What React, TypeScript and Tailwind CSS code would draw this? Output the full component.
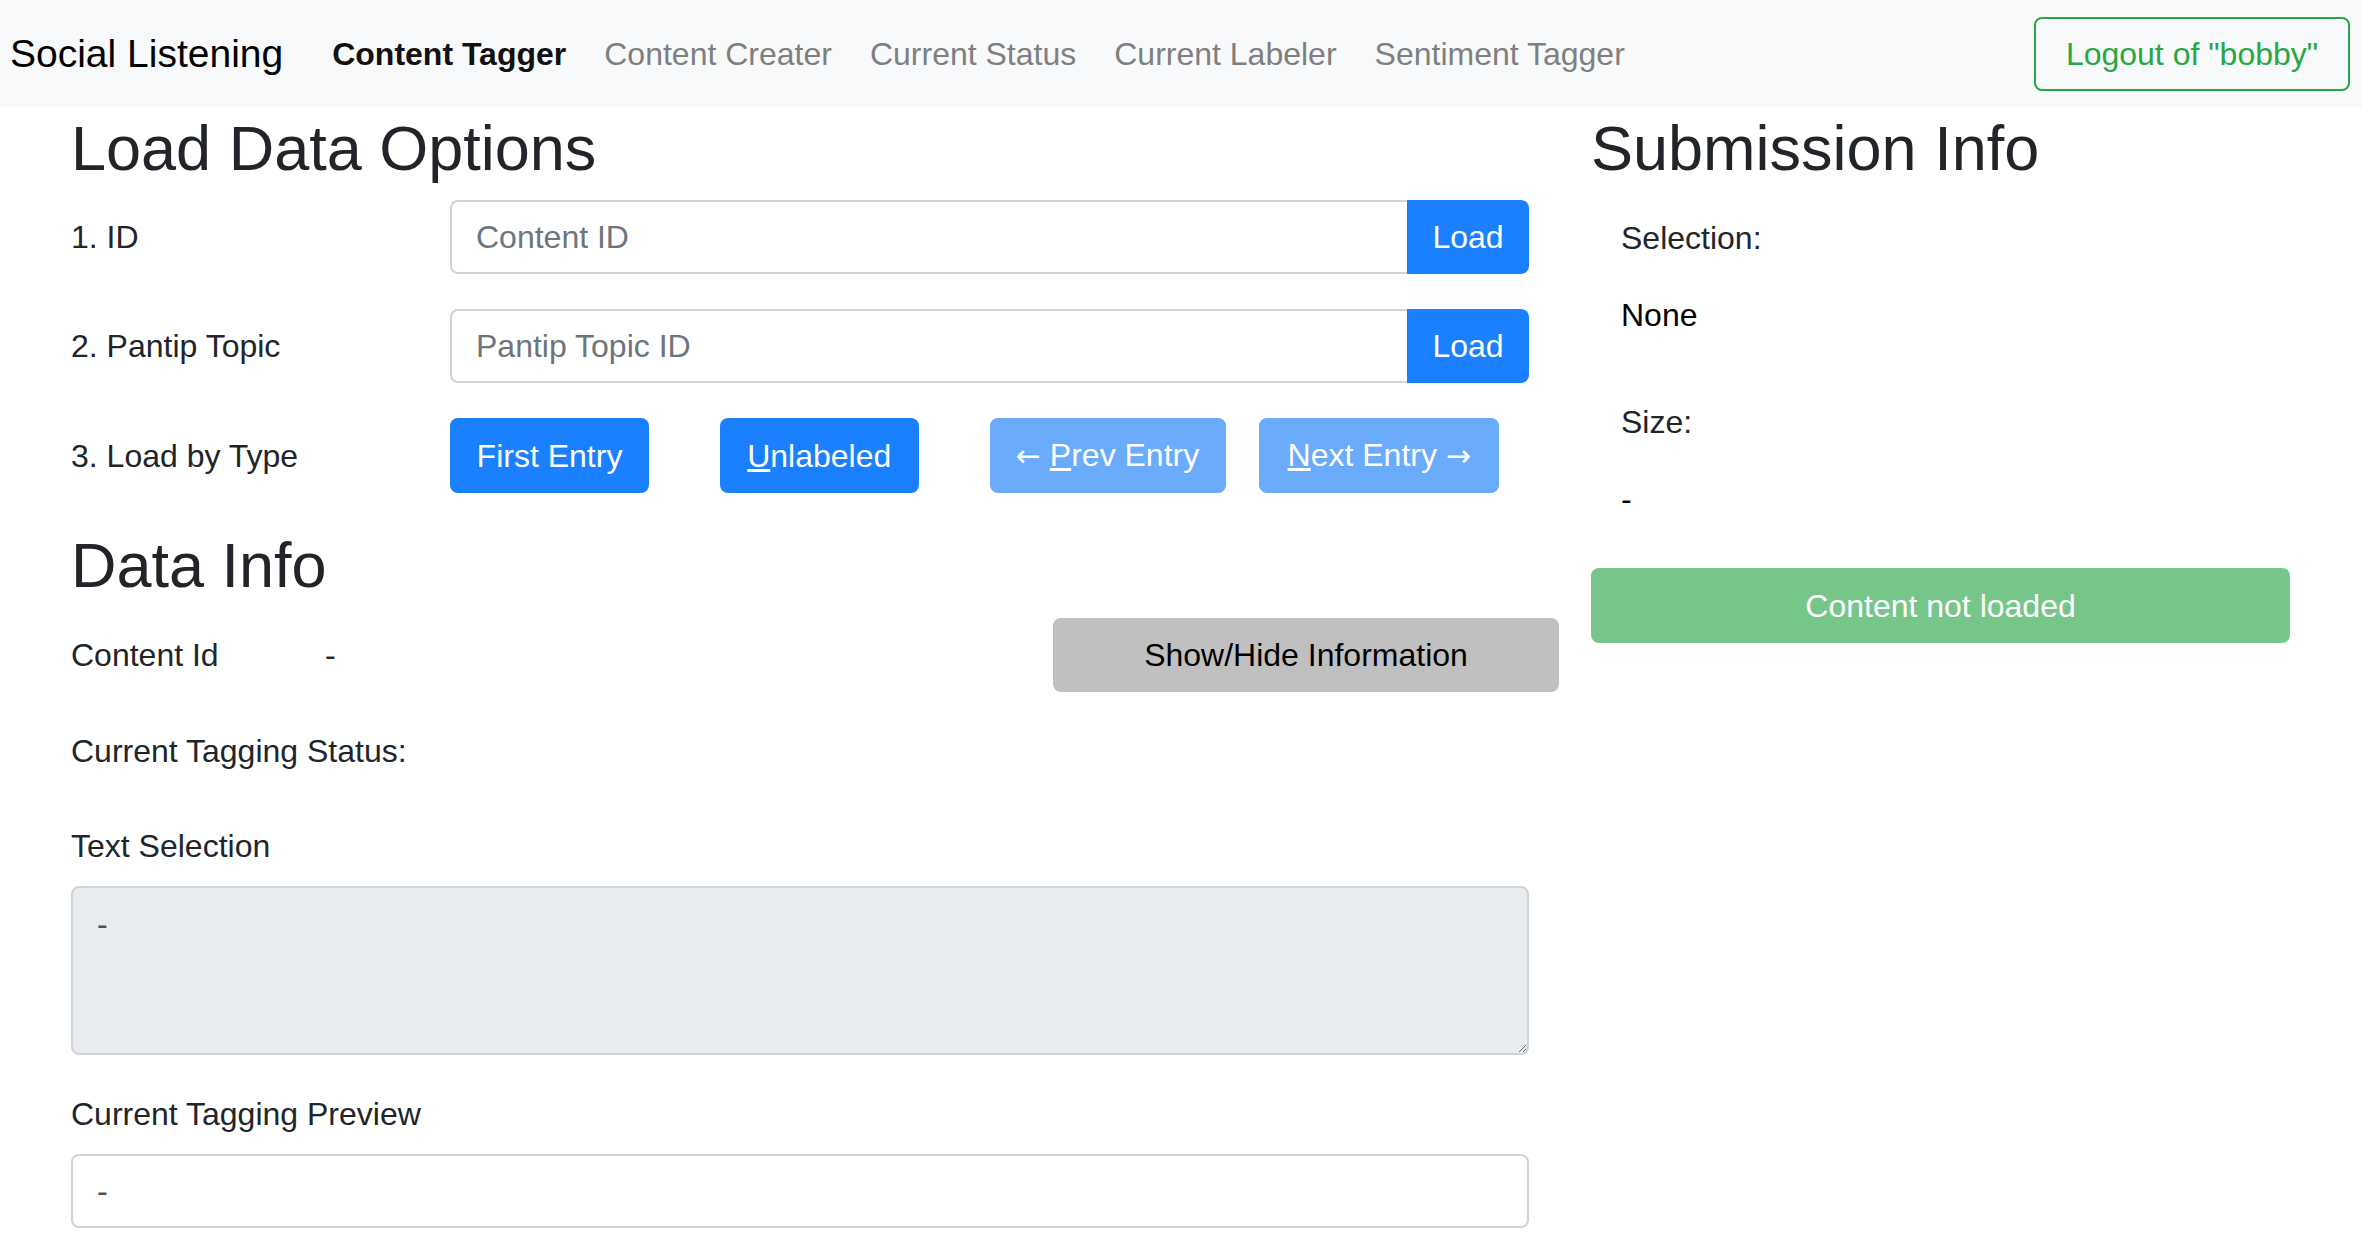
import React from "react";

const NAV_LINKS = [
  { label: "Content Tagger", active: true },
  { label: "Content Creater", active: false },
  { label: "Current Status", active: false },
  { label: "Current Labeler", active: false },
  { label: "Sentiment Tagger", active: false },
];

function LoadRow({ label, placeholder }: { label: string; placeholder: string }) {
  return (
    <div className="flex items-center h-[74px]">
      <div className="w-[379px] text-[32px] leading-[48px]">{label}</div>
      <div className="flex flex-1 h-[74px]">
        <input
          readOnly
          placeholder={placeholder}
          className="flex-1 h-full border-2 border-r-0 border-[#ced4da] rounded-l-[8px] px-[24px] text-[32px] text-[#495057] placeholder:text-[#6c757d] bg-white outline-none"
        />
        <button className="w-[122px] h-full bg-[#1a80ff] text-white text-[32px] rounded-r-[8px]">
          Load
        </button>
      </div>
    </div>
  );
}

function Arrow({ dir }: { dir: "left" | "right" }) {
  return (
    <span className="font-['DejaVu_Sans',sans-serif] text-[30px] leading-[48px]">
      {dir === "left" ? "←" : "→"}
    </span>
  );
}

export default function App() {
  return (
    <div className="min-h-screen bg-white text-[#212529] font-['Liberation_Sans',Arial,sans-serif]">
      {/* top navbar */}
      <nav className="h-[107px] bg-[#f8f9fa] flex items-center pl-[10px] pr-[12px]">
        <div className="text-[39px] leading-[60px] text-black">Social Listening</div>
        <div className="flex items-center ml-[30px]">
          {NAV_LINKS.map((l) => (
            <span
              key={l.label}
              className={`px-[19px] text-[32px] leading-[48px] ${
                l.active ? "font-bold text-[#111]" : "text-[#7f7f7f]"
              }`}
            >
              {l.label}
            </span>
          ))}
        </div>
        <button className="ml-auto w-[316px] h-[74px] border-2 border-[#28a745] rounded-[8px] text-[#28a745] text-[32px] leading-[48px]">
          Logout of "bobby"
        </button>
      </nav>

      <div className="flex pl-[71px]">
        {/* left column */}
        <div className="w-[1488px] flex flex-col">
          <h2 className="mt-[3px] text-[63px] leading-[77px]">Load Data Options</h2>

          <div className="w-[1458px] flex flex-col mt-[13px] gap-[35px]">
            <LoadRow label="1. ID" placeholder="Content ID" />
            <LoadRow label="2. Pantip Topic" placeholder="Pantip Topic ID" />
            <div className="flex items-center h-[75px]">
              <div className="w-[379px] text-[32px] leading-[48px]">3. Load by Type</div>
              <div className="flex-1 grid grid-cols-4 h-[75px]">
                <div>
                  <button className="w-[199px] h-[75px] rounded-[8px] bg-[#1a80ff] text-white text-[32px]">
                    First Entry
                  </button>
                </div>
                <div>
                  <button className="w-[199px] h-[75px] rounded-[8px] bg-[#1a80ff] text-white text-[32px]">
                    <u>U</u>nlabeled
                  </button>
                </div>
                <div>
                  <button className="w-[236px] h-[75px] rounded-[8px] bg-[#6aabfc] text-white text-[32px]">
                    <Arrow dir="left" /> <u>P</u>rev Entry
                  </button>
                </div>
                <div>
                  <button className="w-[240px] h-[75px] rounded-[8px] bg-[#6aabfc] text-white text-[32px]">
                    <u>N</u>ext Entry <Arrow dir="right" />
                  </button>
                </div>
              </div>
            </div>
          </div>

          <h2 className="mt-[34px] text-[63px] leading-[77px]">Data Info</h2>

          <div className="flex items-center mt-[14px] h-[74px]">
            <div className="w-[254px] text-[32px] leading-[48px]">Content Id</div>
            <div className="text-[32px] leading-[48px]">-</div>
            <button className="ml-auto w-[506px] h-[74px] rounded-[8px] bg-[#c0c0c0] text-black text-[32px]">
              Show/Hide Information
            </button>
          </div>

          <div className="mt-[35px] text-[32px] leading-[48px]">Current Tagging Status:</div>
          <div className="mt-[47px] text-[32px] leading-[48px]">Text Selection</div>

          <textarea
            readOnly
            value="-"
            className="mt-[16px] w-[1458px] h-[169px] bg-[#e9ecef] border-2 border-[#ced4da] rounded-[8px] px-[24px] py-[12px] text-[32px] leading-[48px] text-[#495057] outline-none"
          />

          <div className="mt-[35px] text-[32px] leading-[48px]">Current Tagging Preview</div>
          <div className="mt-[16px] w-[1458px] h-[74px] flex items-center border-2 border-[#ced4da] rounded-[8px] px-[24px] text-[32px] text-[#495057]">
            -
          </div>
        </div>

        {/* right column */}
        <div className="ml-[32px] w-[699px] flex flex-col">
          <h2 className="mt-[3px] text-[63px] leading-[77px]">Submission Info</h2>
          <div className="pl-[30px] flex flex-col">
            <div className="mt-[27px] text-[32px] leading-[48px]">Selection:</div>
            <div className="mt-[29px] text-[32px] leading-[48px] text-black">None</div>
            <div className="mt-[59px] text-[32px] leading-[48px]">Size:</div>
            <div className="mt-[29px] text-[32px] leading-[48px] text-black">-</div>
          </div>
          <button className="mt-[45px] h-[75px] rounded-[8px] bg-[#77c689] text-white text-[32px]">
            Content not loaded
          </button>
        </div>
      </div>
    </div>
  );
}
